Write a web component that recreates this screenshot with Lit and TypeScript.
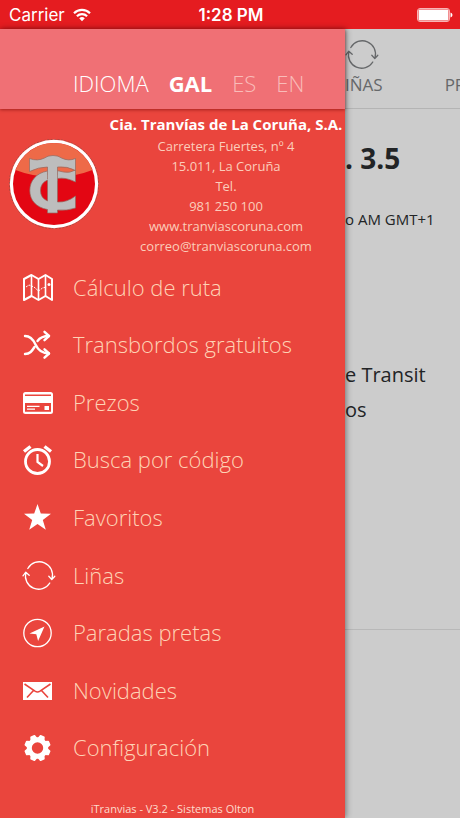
import { LitElement, html, css, svg } from "lit";
import { customElement, property, state } from "lit/decorators.js";
import { classMap } from "lit/directives/class-map.js";

const cycle = svg`
  <g fill="none" stroke="currentColor" stroke-width="1.3" stroke-linecap="round" stroke-linejoin="round">
    <path d="M5.800 8.500A13.200 13.200 0 0 1 30 18.600M26.800 16.200l3 3.400 3-3.400"/>
    <path d="M27.800 23A13.200 13.200 0 0 1 3.800 12.800M1 15.800l2.800-3.600 3.400 3"/>
  </g>`;

const icons: Record<string, unknown> = {
  map: svg`
    <g fill="none" stroke="currentColor" stroke-width="2" stroke-linejoin="round">
      <path d="M2 7l7.500-4 7 4 7-4L30 7v21l-6.500-4-7 4-7-4L2 28z"/>
      <path d="M9.500 3v21M16.500 7v21M23.500 3v21" stroke-width="1.600"/>
      <path d="M4 15l3-2 5 2 4.500 4 4-3 4-1" stroke-width="1" stroke-dasharray="2 1"/>
    </g>
    <circle cx="27" cy="12.500" r="1.500" fill="currentColor"/>`,
  shuffle: svg`
    <g fill="none" stroke="currentColor" stroke-width="2.400" stroke-linecap="round" stroke-linejoin="round">
      <path d="M3 7c5 0 8 3 10.500 8.500S20.500 24.500 27 24.500M3 25c5 0 7-3 9.500-7M15.500 12c2.500-3.500 5.500-5 11.500-5"/>
      <path d="M22.500 2.800L27 7l-4.500 4.200M22.500 20.300l4.500 4.200-4.500 4.200"/>
    </g>`,
  card: svg`
    <path fill="currentColor" fill-rule="evenodd" d="M3.500 5h25a2.500 2.500 0 0 1 2.500 2.500v17a2.500 2.500 0 0 1-2.500 2.500h-25A2.500 2.500 0 0 1 1 24.500v-17A2.500 2.500 0 0 1 3.500 5zM3 7.600v1.400h26V7.600zM3 16v8.800h26V16z"/>
    <path fill="currentColor" d="M5 18.800h12.500v1.300H5zM5 21.400h8v1.300H5zM22.500 19h4.500v4h-4.500z"/>`,
  clock: svg`
    <g fill="none" stroke="currentColor">
      <circle cx="15.500" cy="17.500" r="12" stroke-width="2.800"/>
      <path d="M15.500 10v8l5.500 4" stroke-width="2.200"/>
      <path d="M2 7.500L8.500 2.500M22.500 2.500L29 7.500" stroke-width="3.400"/>
    </g>`,
  star: svg`<path fill="currentColor" d="M15.500 2l3.300 9.600 10.200.1-8.200 6.200 3 9.900-8.300-5.900-8.300 5.900 3-9.900L2 11.700l10.200-.1z"/>`,
  cycle,
  compass: svg`
    <circle cx="15.500" cy="16" r="13.700" fill="none" stroke="currentColor" stroke-width="1.300"/>
    <path fill="currentColor" d="M22.500 9.500L7.500 16.600l6.800.6 1.800 6.800z"/>`,
  mail: svg`
    <path fill="currentColor" d="M1 7h29v18H1z"/>
    <path class="cut" d="M2.500 9l10.500 7.200q2.500 1.600 5 0L28.500 9M5 22.500l6.500-7M26 22.500l-6.500-7"/>`,
  gear: svg`
    <circle cx="15.500" cy="16" r="8.200" fill="none" stroke="currentColor" stroke-width="5"/>
    ${[0, 1, 2, 3, 4, 5, 6, 7].map(
      (tooth) => svg`<path fill="currentColor" transform="rotate(${22.5 + tooth * 45} 15.500 16)" d="M11.700 7l1.200-3.600q.2-.6.800-.6h3.600q.6 0 .8.600L19.300 7z"/>`
    )}`,
};

@customElement("app-icon")
class AppIcon extends LitElement {
  @property() name = "";

  static styles = css`
    :host { display: block; width: 32px; height: 32px; }
    svg { display: block; overflow: visible; }
    .cut { fill: none; stroke: #ea453d; stroke-width: 1.6; }
  `;

  render() {
    return html`<svg width="32" height="32" viewBox="0 0 32 32" aria-hidden="true">${icons[this.name]}</svg>`;
  }
}

@customElement("status-bar")
class StatusBar extends LitElement {
  static styles = css`
    :host {
      display: grid;
      grid-template-columns: 1fr auto 1fr;
      align-items: center;
      height: 29px;
      padding: 0 7px 0 9px;
      background: #e51c20;
      color: #fff;
      font: 400 17px/24px Inter, sans-serif;
    }
    .carrier { display: flex; align-items: center; gap: 8px; }
    .time { font-weight: 600; }
    .battery { justify-self: end; }
  `;

  render() {
    return html`
      <span class="carrier">Carrier
        <svg width="18" height="14" viewBox="0 0 18 14" aria-hidden="true">
          <g fill="none" stroke="currentColor" stroke-width="2.200">
            <path d="M1 5.200a11.500 11.500 0 0 1 16 0M3.900 8.200a7.300 7.300 0 0 1 10.200 0"/>
          </g>
          <path fill="currentColor" d="M6.200 10.300a4.100 4.100 0 0 1 5.600 0L9 13.200z"/>
        </svg>
      </span>
      <span class="time">1:28 PM</span>
      <svg class="battery" width="36" height="14" viewBox="0 0 36 14" aria-hidden="true">
        <rect x=".5" y=".5" width="32" height="13" rx="2.500" fill="none" stroke="#f9b4b5"/>
        <rect x="1.500" y="1.500" width="30" height="11" rx="1" fill="#fff"/>
        <path fill="#fff" d="M33.500 4.500c2.600.8 2.600 4.200 0 5z"/>
      </svg>`;
  }
}

@customElement("side-drawer")
class SideDrawer extends LitElement {
  @state() private lang = "GAL";

  private entries = [
    ["map", "Cálculo de ruta"],
    ["shuffle", "Transbordos gratuitos"],
    ["card", "Prezos"],
    ["clock", "Busca por código"],
    ["star", "Favoritos"],
    ["cycle", "Liñas"],
    ["compass", "Paradas pretas"],
    ["mail", "Novidades"],
    ["gear", "Configuración"],
  ];

  static styles = css`
    :host {
      display: flex;
      flex-direction: column;
      background: #ea453d;
      color: #fff;
      box-shadow: 1px 0 6px rgba(0, 0, 0, 0.45);
      z-index: 1;
      font-family: "Open Sans", sans-serif;
    }
    .langs {
      display: flex;
      align-items: flex-end;
      gap: 20px;
      height: 80px;
      padding: 0 0 11px 73px;
      box-sizing: border-box;
      background: #f07075;
      box-shadow: 0 1px 3px rgba(100, 0, 0, 0.5);
      font-size: 22px;
      line-height: 30px;
      font-weight: 300;
    }
    .lang {
      border: 0;
      padding: 0;
      background: none;
      font: inherit;
      color: #f9bcb9;
      cursor: pointer;
    }
    .active { color: #fff; font-weight: 700; }
    .company {
      display: grid;
      grid-template-columns: 107px 1fr;
      align-items: center;
      height: 150px;
    }
    .logo { justify-self: center; }
    .contact {
      display: flex;
      flex-direction: column;
      align-items: center;
      font-style: normal;
      font-size: 13px;
      line-height: 20px;
      white-space: nowrap;
      color: #fbcdbb;
    }
    .name { font-size: 15px; line-height: 24px; font-weight: 700; color: #fff; }
    .contact a { color: inherit; text-decoration: none; }
    .menu { flex: 1; display: grid; grid-auto-rows: 1fr; }
    .entry {
      display: flex;
      align-items: center;
      gap: 19px;
      padding-left: 22px;
      color: #fff;
      text-decoration: none;
    }
    .label { padding-bottom: 2px; font-size: 22px; line-height: 30px; font-weight: 300; color: #fed3b5; }
    .version {
      display: flex;
      align-items: flex-end;
      justify-content: center;
      height: 41px;
      font-size: 11px;
      line-height: 18px;
      color: #fddccd;
    }
  `;

  render() {
    return html`
      <div class="langs">
        <span>IDIOMA</span>
        ${["GAL", "ES", "EN"].map(
          (code) => html`<button
            class=${classMap({ lang: true, active: this.lang === code })}
            @click=${() => (this.lang = code)}
          >${code}</button>`
        )}
      </div>
      <div class="company">
        <svg class="logo" width="90" height="90" viewBox="0 0 90 90" role="img" aria-label="Tranvías de La Coruña">
          <circle cx="45" cy="45" r="44.600" fill="none" stroke="#8d4a42" stroke-width=".8" stroke-dasharray="2 1.500"/>
          <circle cx="45" cy="45" r="44.200" fill="#fff"/>
          <circle cx="45" cy="45" r="41" fill="#e30613"/>
          <path fill="#ee6a48" d="M6.500 31a41 41 0 0 1 77 0Q66 38 45 38T6.500 31z"/>
          <g fill="#bdbdbd" stroke="#94695f" stroke-width=".7">
            <path fill-rule="evenodd" d="M66.500 31v12Q57 38 48.500 39.500V63Q58 63.500 66.500 57v12Q58 72 48.500 71v3h-10v-3.500C27 68.500 20.800 61 20.800 51.500S27 34 38.500 32q10-1.500 16 1 6 1.500 12-2zM38.500 41q-7 3-7 10.500T38.500 62z"/>
            <path d="M20.500 19.500q8 3 15-.5 3-2.500 8.500-2.500t8.500 2.500q7 3.500 14 .5v12q-8-4.500-18-3.500V40h-10V28q-9 0-18 4.500z"/>
          </g>
          <path fill="#bdbdbd" d="M38.900 36h9.200v6h-9.200z"/>
        </svg>
        <address class="contact">
          <strong class="name">Cia. Tranvías de La Coruña, S.A.</strong>
          <span>Carretera Fuertes, nº 4</span>
          <span>15.011, La Coruña</span>
          <span>Tel.</span>
          <a href="tel:981250100">981 250 100</a>
          <a href="#web">www.tranviascoruna.com</a>
          <a href="mailto:correo@tranviascoruna.com">correo@tranviascoruna.com</a>
        </address>
      </div>
      <nav class="menu">
        ${this.entries.map(
          ([icon, label]) => html`<a class="entry" href="#${icon}">
            <app-icon name=${icon}></app-icon><span class="label">${label}</span>
          </a>`
        )}
      </nav>
      <div class="version">iTranvias - V3.2 - Sistemas Olton</div>`;
  }
}

@customElement("news-page")
class NewsPage extends LitElement {
  static styles = css`
    :host {
      display: block;
      overflow: hidden;
      background: #ccc;
      color: #222426;
      font-family: "Open Sans", sans-serif;
      white-space: nowrap;
    }
    .tabs {
      display: flex;
      gap: 62px;
      height: 80px;
      box-sizing: border-box;
      padding-top: 10px;
      border-bottom: 1px solid #b4b4b4;
    }
    .tab {
      display: flex;
      flex-direction: column;
      justify-content: space-between;
      color: #66686a;
      text-decoration: none;
      font-size: 17px;
      line-height: 24px;
      padding-bottom: 11px;
    }
    .tab:last-child { justify-content: flex-end; }
    .article { height: 521px; box-sizing: border-box; padding-top: 29px; border-bottom: 1px solid #b8b8b8; }
    .title { margin: 0; font-size: 28px; line-height: 40px; font-weight: 700; }
    .date { margin: 29px 0 0; font-size: 15px; line-height: 24px; }
    .text { margin: 126px 0 0; font-size: 20px; line-height: 35px; }
  `;

  render() {
    return html`
      <nav class="tabs">
        <a class="tab" href="#linas"><app-icon name="cycle"></app-icon>IÑAS</a>
        <a class="tab" href="#prezos">PREZOS</a>
      </nav>
      <article class="article">
        <h1 class="title">. 3.5</h1>
        <p class="date">o AM GMT+1</p>
        <p class="text">e Transit<br>os</p>
      </article>`;
  }
}

@customElement("app-root")
class AppRoot extends LitElement {
  static styles = css`
    :host { display: flex; flex-direction: column; min-height: 100vh; }
    .stage { flex: 1; display: grid; grid-template-columns: 3fr minmax(0, 1fr); }
  `;

  render() {
    return html`
      <status-bar></status-bar>
      <div class="stage">
        <side-drawer></side-drawer>
        <news-page></news-page>
      </div>`;
  }
}
